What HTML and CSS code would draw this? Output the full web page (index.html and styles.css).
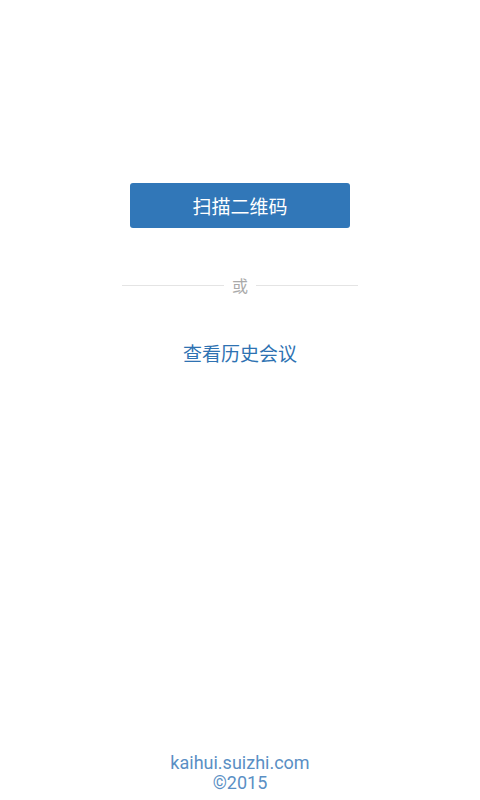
FILE: index.html
```html
<!DOCTYPE html>
<html lang="zh-CN">
<head>
<meta charset="utf-8">
<title>开会</title>
<link rel="stylesheet" href="styles.css">
</head>
<body>
<div class="page">
  <main class="main">
    <a class="scan-btn" href="#">扫描二维码</a>
    <div class="divider"><span class="divider-line"></span><span class="divider-text">或</span><span class="divider-line"></span></div>
    <a class="history-link" href="#">查看历史会议</a>
  </main>
  <footer class="footer">
    <div>kaihui.suizhi.com</div>
    <div>©2015</div>
  </footer>
</div>
</body>
</html>
```
FILE: styles.css
```css
html, body {
  margin: 0;
  padding: 0;
  background: #ffffff;
}
body {
  font-family: "Noto Sans CJK SC", "Noto Sans", sans-serif;
}
.page {
  display: flex;
  flex-direction: column;
  height: 800px;
}
.main {
  display: flex;
  flex-direction: column;
  align-items: center;
  padding-top: 183px;
}
.scan-btn {
  display: flex;
  align-items: center;
  justify-content: center;
  width: 220px;
  height: 45px;
  background: #3177b8;
  border-radius: 3px;
  color: #ffffff;
  font-size: 19px;
  text-decoration: none;
  line-height: 1;
}
.divider {
  display: flex;
  align-items: center;
  width: 236px;
  height: 20px;
  margin-top: 47px;
  gap: 8px;
}
.divider-line {
  flex: 1;
  height: 1px;
  background: #e4e4e4;
}
.divider-text {
  font-size: 16px;
  color: #aaaaaa;
  line-height: 20px;
}
.history-link {
  margin-top: 45px;
  font-size: 19px;
  line-height: 26px;
  color: #2e72b2;
  text-decoration: none;
}
.footer {
  margin-top: auto;
  padding-bottom: 7px;
  text-align: center;
  font-family: Roboto, "Noto Sans", sans-serif;
  font-size: 18px;
  line-height: 20px;
  color: #5a8fc4;
}
```
